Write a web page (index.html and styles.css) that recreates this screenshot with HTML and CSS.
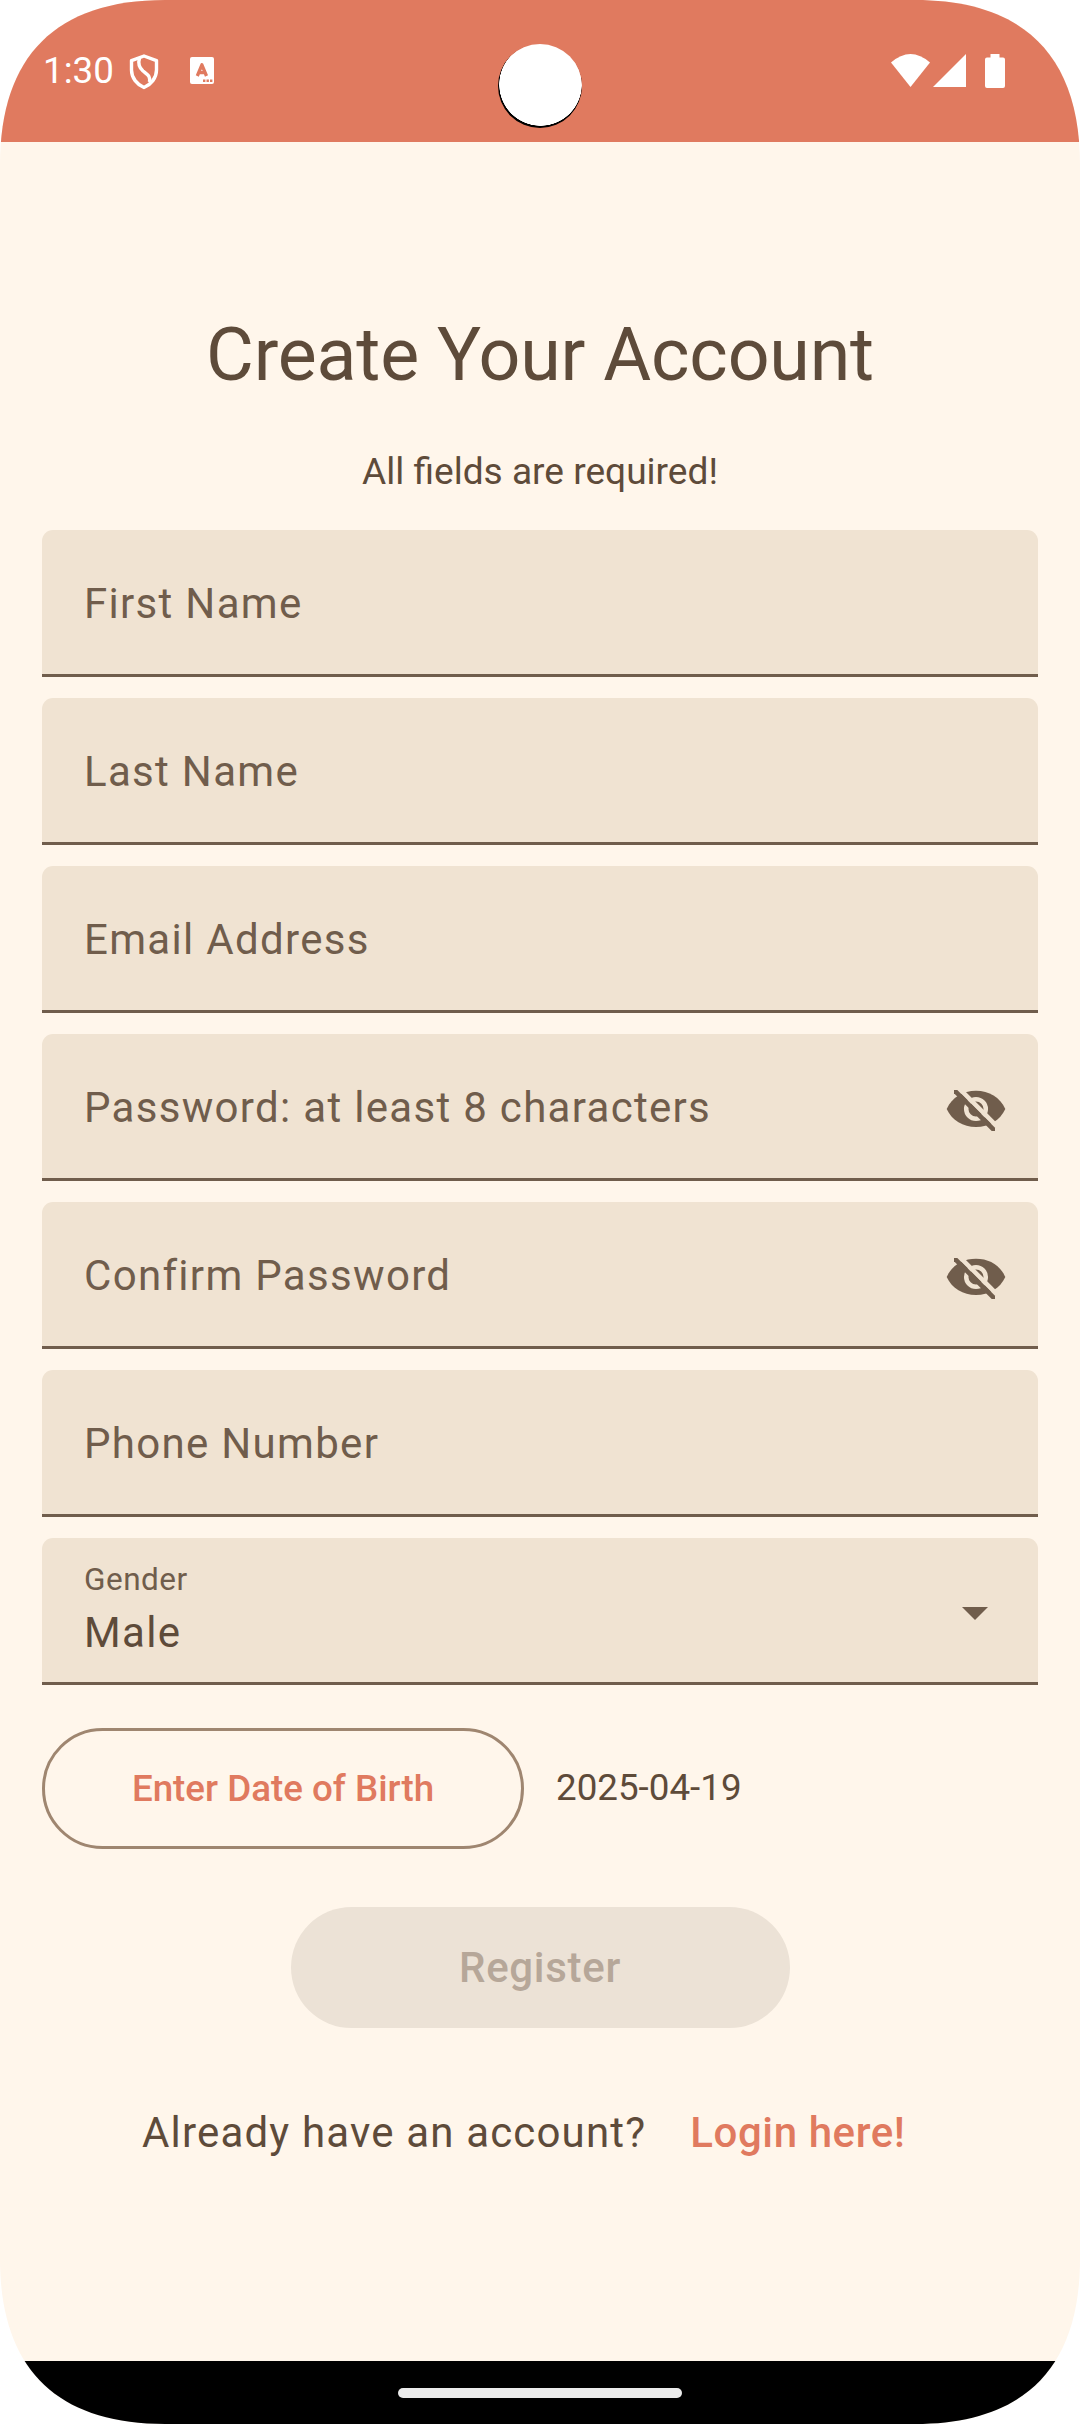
FILE: index.html
```html
<!DOCTYPE html>
<html lang="en">
<head>
<meta charset="utf-8">
<title>Create Your Account</title>
<link rel="stylesheet" href="styles.css">
</head>
<body>
<div class="screen">
  <header class="status">
    <div class="status-left">
      <span class="clock">1:30</span>
      <svg class="shield" viewBox="0 0 30 36" fill="none" stroke="#fff" stroke-width="3.4" stroke-linejoin="round"><path d="M15 2 L27.500 6.600 V16 C27.500 24 22 30.500 15 33.500 C8 30.500 2.500 24 2.500 16 V6.600 Z"/><path d="M10.500 4 C9 9 9.500 13 14 17 C19 21 21.500 22 20.500 28"/></svg>
      <svg class="keyboard" viewBox="0 0 24 27"><path fill="#fff" d="M2 0H22Q24 0 24 2V25Q24 27 22 27H2Q0 27 0 25V2Q0 0 2 0Z"/><path d="M7.300 19 L11.900 7.800 L16.500 19 M9 15.600 H15" fill="none" stroke="#e07a5f" stroke-width="3.300" stroke-linejoin="round"/><path fill="#e07a5f" d="M13 22.500h2.400v2.400h-2.400zM16.500 22.500h2.400v2.400h-2.400zM20 22.500h2.400v2.400h-2.400z"/></svg>
    </div>
    <div class="status-right">
      <svg class="wifi" viewBox="0 0 39 33"><path fill="#fff" d="M0 8.500 Q19.500 -8.500 39 8.500 L19.500 33Z"/></svg>
      <svg class="signal" viewBox="0 0 33 33"><path fill="#fff" d="M33 0V33H0Z"/></svg>
      <svg class="battery" viewBox="0 0 20 34"><path fill="#fff" d="M5.500 0H14.500V3.500H18Q20 3.500 20 5.500V32Q20 34 18 34H2Q0 34 0 32V5.500Q0 3.500 2 3.500H5.500Z"/></svg>
    </div>
    <div class="camera"></div>
  </header>
  <main class="form">
    <h1 class="title">Create Your Account</h1>
    <p class="note">All fields are required!</p>
    <div class="fields">
      <div class="field"><span class="label">First Name</span></div>
      <div class="field"><span class="label">Last Name</span></div>
      <div class="field"><span class="label">Email Address</span></div>
      <div class="field"><span class="label">Password: at least 8 characters</span><svg class="eye" viewBox="0 0 60 46"><path class="eye-fill" d="M.7 21C6 9 17 2.700 30 2.700S54 9 59.300 21C54 32.500 43 39 30 39S6 32.500 .7 21Z"/><circle class="eye-gap" cx="30" cy="21" r="9.800"/><path class="eye-gap" d="M14 1.300L52 39.300"/><path class="eye-fill" d="M8 2H11.300L49 39.700V43H45.700L8 5.300Z"/></svg></div>
      <div class="field"><span class="label">Confirm Password</span><svg class="eye" viewBox="0 0 60 46"><path class="eye-fill" d="M.7 21C6 9 17 2.700 30 2.700S54 9 59.300 21C54 32.500 43 39 30 39S6 32.500 .7 21Z"/><circle class="eye-gap" cx="30" cy="21" r="9.800"/><path class="eye-gap" d="M14 1.300L52 39.300"/><path class="eye-fill" d="M8 2H11.300L49 39.700V43H45.700L8 5.300Z"/></svg></div>
      <div class="field"><span class="label">Phone Number</span></div>
      <div class="field">
        <div class="select"><span class="caption">Gender</span><span class="value">Male</span></div>
        <svg class="arrow" viewBox="0 0 26 13"><path d="M0 0H26L13 13Z"/></svg>
      </div>
    </div>
    <div class="birth"><button class="outlined">Enter Date of Birth</button><span class="date">2025-04-19</span></div>
    <button class="register">Register</button>
    <p class="login"><span>Already have an account?</span><a class="link">Login here!</a></p>
  </main>
  <footer class="nav"><div class="handle"></div></footer>
</div>
</body>
</html>
```
FILE: styles.css
```css
* { box-sizing: border-box; }
body { margin: 0; background: #fff; font-family: Roboto, sans-serif; color: #5e4b3a; }
.screen { width: 1080px; height: 2424px; overflow: hidden; background: #fff6eb; display: flex; flex-direction: column; clip-path: path("M0 165C0 56 56 0 165 0H915C1024 0 1080 56 1080 165V2259C1080 2368 1024 2424 915 2424H165C56 2424 0 2368 0 2259Z"); }
.status { position: relative; height: 142px; background: #e07a5f; display: flex; justify-content: space-between; padding: 54px 75px 0 43px; color: #fff; flex: none; }
.status-left, .status-right { display: flex; align-items: flex-start; }
.clock { font-size: 36.75px; line-height: 36px; width: 70px; margin-right: 16px; margin-top: -1px; white-space: nowrap; }
.shield { width: 30px; height: 36px; }
.keyboard { width: 24px; height: 27px; margin: 3px 0 0 31px; }
.wifi { width: 39px; height: 33px; }
.signal { width: 33px; height: 33px; margin-left: 3px; }
.battery { width: 20px; height: 34px; margin-left: 19px; }
.camera { position: absolute; left: 498px; top: 44px; width: 84px; height: 84px; border-radius: 50%; background: radial-gradient(circle at 42.5px 40.5px, #fff 41px, #000 41.5px); }
.form { flex: 1; display: flex; flex-direction: column; padding: 166px 42px 0; }
.title { margin: 0; font-size: 73.5px; line-height: 94px; font-weight: 400; text-align: center; letter-spacing: -.2px; }
.note { margin: 44px 0 0; font-size: 37.1px; line-height: 52px; text-align: center; }
.fields { margin-top: 32px; display: flex; flex-direction: column; gap: 21px; }
.field { height: 147px; background: #f0e3d2; border-radius: 11px 11px 0 0; border-bottom: 3px solid #705d4c; display: flex; align-items: center; justify-content: space-between; padding: 3px 31px 0 42px; color: #705d4c; }
.label, .value { font-size: 42px; line-height: 63px; letter-spacing: 1.3125px; }
.eye { width: 60px; height: 46px; margin: 7px 1px 0 0; }
.eye-fill { fill: #705d4c; }
.eye-gap { fill: none; stroke: #f0e3d2; stroke-width: 4.5px; }
.select { display: flex; flex-direction: column; }
.caption { font-size: 31.5px; line-height: 42px; letter-spacing: .5px; }
.value { color: #5e4b3a; }
.arrow { width: 26px; height: 13px; margin: 4px 19px 0 0; fill: #705d4c; }
.birth { margin-top: 43px; display: flex; align-items: center; }
button { font-family: inherit; font-weight: 500; border-radius: 61px; height: 121px; padding: 0; }
.outlined { width: 482px; border: 3px solid #9f8670; background: none; color: #e07a5f; font-size: 36.75px; }
.date { margin: -2px 0 0 32px; font-size: 36.75px; line-height: 52px; }
.register { width: 499px; margin: 58px auto 0; border: 0; background: #ece2d6; color: #b6a799; font-size: 42px; letter-spacing: .7px; }
.login { margin: 73px 0 0; padding-left: 100px; display: flex; font-size: 42px; line-height: 63px; letter-spacing: 1.17px; white-space: nowrap; }
.link { margin-left: 44px; color: #e07a5f; font-weight: 500; letter-spacing: .6px; }
.nav { height: 63px; background: #000; display: flex; justify-content: center; padding-top: 27px; flex: none; }
.handle { width: 284px; height: 10px; border-radius: 5px; background: #ebebeb; }
```
